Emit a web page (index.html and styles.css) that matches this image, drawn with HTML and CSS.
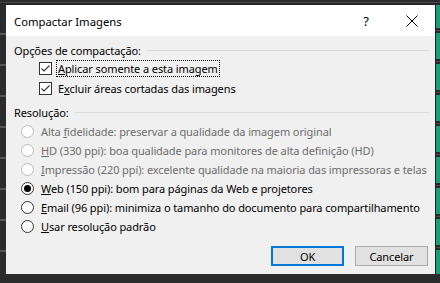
FILE: index.html
```html
<!DOCTYPE html>
<html lang="pt">
<head>
<meta charset="utf-8">
<title>Compactar Imagens</title>
<link rel="stylesheet" href="styles.css">
</head>
<body>
<div class="screen">
  <div class="top-strip"></div>
  <div class="middle">
    <div class="left-strip"></div>
    <div class="dialog">
      <div class="titlebar">
        <span class="title">Compactar Imagens</span>
        <span class="tb-btn help">?</span>
        <span class="tb-btn close">
          <svg width="12" height="12" viewBox="0 0 12 12"><path d="M0.5 0.5 L11.5 11.5 M11.5 0.5 L0.5 11.5" stroke="#000" stroke-width="1" fill="none"/></svg>
        </span>
      </div>
      <div class="content">
        <div class="group-head"><span>Opções de compactação:</span><span class="rule"></span></div>
        <div class="check-row">
          <span class="checkbox"><svg width="11" height="11" viewBox="0 0 11 11"><path d="M1.5 5.5 L4 8 L9.5 2.5" stroke="#333" stroke-width="1.1" fill="none"/></svg></span>
          <span class="label focus"><u>A</u>plicar somente a esta imagem</span>
        </div>
        <div class="check-row">
          <span class="checkbox"><svg width="11" height="11" viewBox="0 0 11 11"><path d="M1.5 5.5 L4 8 L9.5 2.5" stroke="#333" stroke-width="1.1" fill="none"/></svg></span>
          <span class="label">E<u>x</u>cluir áreas cortadas das imagens</span>
        </div>
        <div class="group-head res-head"><span>Resolução:</span><span class="rule"></span></div>
        <div class="radio-row disabled"><span class="radio"></span><span class="label">Alta <u>f</u>idelidade: preservar a qualidade da imagem original</span></div>
        <div class="radio-row disabled"><span class="radio"></span><span class="label"><u>H</u>D (330 ppi): boa qualidade para monitores de alta definição (HD)</span></div>
        <div class="radio-row disabled"><span class="radio"></span><span class="label"><u>I</u>mpressão (220 ppi): excelente qualidade na maioria das impressoras e telas</span></div>
        <div class="radio-row"><span class="radio checked"></span><span class="label"><u>W</u>eb (150 ppi): bom para páginas da Web e projetores</span></div>
        <div class="radio-row"><span class="radio"></span><span class="label"><u>E</u>mail (96 ppi): minimiza o tamanho do documento para compartilhamento</span></div>
        <div class="radio-row"><span class="radio"></span><span class="label"><u>U</u>sar resolução padrão</span></div>
        <div class="buttons">
          <span class="btn default">OK</span>
          <span class="btn">Cancelar</span>
        </div>
      </div>
    </div>
    <div class="right-strip"></div>
  </div>
  <div class="bottom-strip"></div>
</div>
</body>
</html>
```
FILE: styles.css
```css
* { box-sizing: border-box; }
html, body { margin: 0; padding: 0; }
body {
  width: 440px;
  height: 283px;
  overflow: hidden;
  background: #2b2b2b;
  font-family: "Noto Sans", "Open Sans", sans-serif;
  font-size: 11px;
  letter-spacing: -0.1px;
  color: #000;
}
.screen { display: flex; flex-direction: column; width: 440px; height: 283px; }
.top-strip {
  height: 5px;
  background: linear-gradient(to bottom, #2b2b2b 0, #2b2b2b 2px, #4a4a4a 2px, #4a4a4a 3px, #262626 3px);
}
.middle { display: flex; height: 269px; }
.left-strip {
  width: 6px;
  flex-shrink: 0;
  background: repeating-linear-gradient(to bottom, #2b2b2b 0, #2b2b2b 28px, #555 28px, #555 30px, #2b2b2b 30px, #2b2b2b 31px);
}
.right-strip {
  width: 5px;
  flex-shrink: 0;
  border-left: 1px solid #1f1f1f;
  background: repeating-linear-gradient(to bottom, #1b9d78 0, #1b9d78 23px, #2a2a2a 23px, #2a2a2a 25px, #4a4a4a 25px, #4a4a4a 26px, #2a2a2a 26px, #2a2a2a 28px, #1b9d78 28px, #1b9d78 31px);
}
.bottom-strip { height: 9px; background: #2b2b2b; }
.dialog {
  width: 429px;
  flex-shrink: 0;
  display: flex;
  flex-direction: column;
  background: #f0f0f0;
  overflow: hidden;
}
.titlebar {
  height: 31px;
  background: #fff;
  display: flex;
  align-items: center;
}
.title { flex: 1; padding-left: 8px; font-size: 11.3px; letter-spacing: 0; padding-top: 1px; }
.tb-btn {
  width: 46px;
  height: 31px;
  flex-shrink: 0;
  display: flex;
  align-items: center;
  justify-content: center;
}
.help { font-size: 13px; }
.content {
  flex: 1;
  display: flex;
  flex-direction: column;
  padding: 6px 6px 8px 8px;
}
.group-head {
  height: 16px;
  display: flex;
  align-items: center;
  gap: 6px;
}
.group-head .rule { flex: 1; height: 1px; background: #dcdcdc; }
.res-head { margin-top: 6px; }
.check-row {
  height: 20px;
  display: flex;
  align-items: center;
  padding-left: 25px;
  gap: 6px;
}
.checkbox {
  width: 13px;
  height: 13px;
  flex-shrink: 0;
  border: 1px solid #333;
  background: #fff;
  display: flex;
  align-items: center;
  justify-content: center;
}
.checkbox svg { display: block; }
.label { white-space: nowrap; }
.focus { outline: 1px dotted #000; outline-offset: 0; padding: 0 1px; margin-left: -1px; }
.radio-row {
  height: 19px;
  display: flex;
  align-items: center;
  padding-left: 7px;
  gap: 7px;
}
.res-head + .radio-row { margin-top: 2px; }
.radio {
  width: 13px;
  height: 13px;
  flex-shrink: 0;
  border: 1px solid #333;
  border-radius: 50%;
  background: #fff;
  display: flex;
  align-items: center;
  justify-content: center;
}
.radio.checked::after {
  content: "";
  width: 7px;
  height: 7px;
  border-radius: 50%;
  background: #000;
}
.disabled .radio { border-color: #bcbcbc; }
.disabled .label { color: #6d6d6d; }
.buttons {
  margin-top: auto;
  display: flex;
  justify-content: flex-end;
  gap: 11px;
  padding-right: 1px;
}
.btn {
  width: 73px;
  height: 20px;
  border: 1px solid #adadad;
  background: #e1e1e1;
  display: flex;
  align-items: center;
  justify-content: center;
}
.btn.default { border: 2px solid #0078d7; }
```
